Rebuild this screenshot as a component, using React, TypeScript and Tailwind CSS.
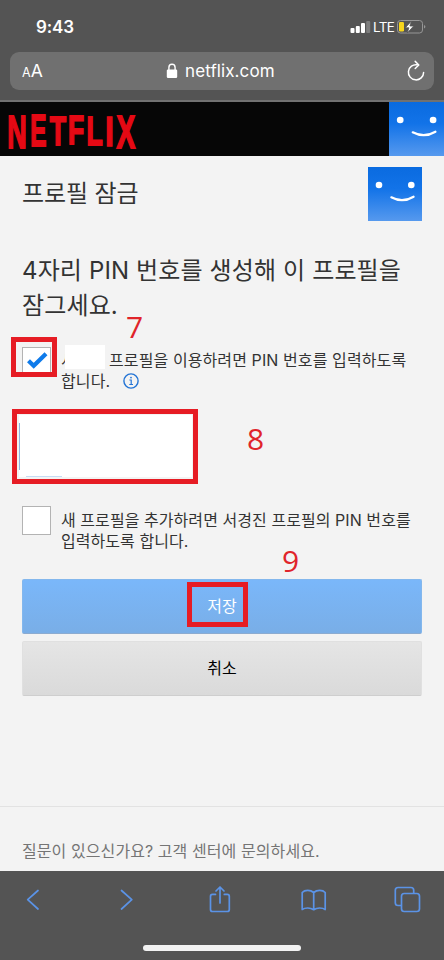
import clsx from "clsx";

interface AvatarProps {
  id: string;
  className?: string;
}

const Avatar: React.FC<AvatarProps> = ({ id, className }) => (
  <svg viewBox="0 0 54 54" preserveAspectRatio="none" className={className}>
    <defs>
      <linearGradient id={id} x1="0" y1="0" x2="0" y2="1">
        <stop offset="0" stopColor="#0a6be0" />
        <stop offset="0.4" stopColor="#1273e8" />
        <stop offset="1" stopColor="#5699ee" />
      </linearGradient>
    </defs>
    <rect width="54" height="54" fill={`url(#${id})`} />
    <circle cx="11" cy="18" r="3.3" fill="#fff" />
    <circle cx="43.3" cy="18" r="3.3" fill="#fff" />
    <path
      d="M23.3 30.3 Q34.5 36.4 45.6 29.7"
      fill="none"
      stroke="#fff"
      strokeWidth="2.2"
      strokeLinecap="round"
    />
  </svg>
);

// x, width and height of every letter, the bottom edge is slightly arched
const logo = [
  { char: "N", x: 9, width: 15.8, height: 32 },
  { char: "E", x: 31.8, width: 13.6, height: 30 },
  { char: "T", x: 50.2, width: 15.2, height: 28.5 },
  { char: "F", x: 69.8, width: 13.5, height: 28 },
  { char: "L", x: 88.2, width: 13.6, height: 28.5 },
  { char: "I", x: 107.2, width: 4.4, height: 29.5 },
  { char: "X", x: 117, width: 17.6, height: 32 },
];

// ink offset and ink width of the bold glyphs in em
const ink: Record<string, [number, number]> = {
  N: [0.067, 0.587],
  E: [0.067, 0.56],
  T: [0.021, 0.57],
  F: [0.067, 0.511],
  L: [0.067, 0.513],
  I: [0.067, 0.144],
  X: [0.021, 0.625],
};

const Logo = () => (
  <svg
    width="150"
    height="54"
    viewBox="0 0 150 54"
    className="overflow-visible"
  >
    {logo.map(({ char, x, width, height }) => {
      const sx = width / (ink[char][1] * 40);
      const sy = height / (0.688 * 40);
      return (
        <text
          key={char}
          transform={`translate(${x - ink[char][0] * 40 * sx} ${
            14.3 + height
          }) scale(${sx} ${sy})`}
          fontSize="40"
          fill="#e50914"
          stroke="#e50914"
          strokeWidth="1.5"
          vectorEffect="non-scaling-stroke"
          className="font-['Liberation_Sans',sans-serif] font-bold"
        >
          {char}
        </text>
      );
    })}
  </svg>
);

const StatusBar = () => (
  <div className="flex h-[51px] items-start justify-between pl-[36px] pr-[18px]">
    <span className="mt-[15px] text-[17px] leading-6 font-semibold tracking-[-0.1px] text-white">
      9:43
    </span>
    <div className="mt-[19px] flex">
      <svg width="22" height="16" viewBox="0 0 22 16" fill="#fff">
        <rect x="0.5" y="9" width="4" height="5" rx="1" />
        <rect x="5.8" y="7" width="4" height="7" rx="1" />
        <rect x="11" y="4" width="4" height="10" rx="1" />
        <rect x="16.2" y="2" width="4" height="12" rx="1" fill="#7d7d7d" />
      </svg>
      <span className="w-[24px] pl-px text-[13.5px] leading-4 tracking-[-0.7px] text-white">
        LTE
      </span>
      <svg width="30" height="16" viewBox="0 0 30 16">
        <rect
          x="1.5"
          y="1.5"
          width="25"
          height="12.5"
          rx="3"
          fill="none"
          stroke="#969696"
        />
        <path d="M28 6v3.5q1.4-.5 1.4-1.7T28 6" fill="#969696" />
        <rect x="3" y="3" width="5" height="9.5" rx="1.2" fill="#f7d51c" />
        <path
          d="M15.5 2l-6.2 6.8h3.6L11.3 14l6.4-7h-3.8z"
          fill="#fff"
          stroke="#565656"
          strokeWidth="0.8"
        />
      </svg>
    </div>
  </div>
);

const AddressBar = () => (
  <div className="mx-[10px] mt-[1px] flex h-[38px] items-center rounded-[9px] bg-[#707070] text-white">
    <div className="ml-[12px] flex w-[144px] items-baseline">
      <span className="text-[12.5px]">A</span>
      <span className="text-[17.5px]">A</span>
    </div>
    <svg width="12" height="16" viewBox="0 0 12 16">
      <rect x="0.8" y="6.5" width="10.4" height="8.5" rx="1.2" fill="#fff" />
      <path
        d="M2.9 7V4.4a3.1 3.1 0 0 1 6.2 0V7"
        fill="none"
        stroke="#fff"
        strokeWidth="1.4"
      />
    </svg>
    <span className="mt-px ml-[7px] text-[17px] tracking-[0.1px]">
      netflix.com
    </span>
    <svg
      width="20"
      height="22"
      viewBox="0 0 20 22"
      fill="none"
      stroke="#fff"
      strokeWidth="1.5"
      strokeLinecap="round"
      strokeLinejoin="round"
      className="mr-[8px] ml-auto"
    >
      <path d="M11.3 4.8A7.6 7.6 0 1 0 17.6 12.4" />
      <path d="M9.2 1.4l3.6 3.6-3.6 3.5" />
    </svg>
  </div>
);

interface CheckboxProps {
  checked?: boolean;
  className?: string;
}

const Checkbox: React.FC<CheckboxProps> = ({ checked, className }) => (
  <div
    className={clsx(
      "h-[29px] w-[29px] shrink-0 border border-[#b3b3b3] bg-white",
      className
    )}
  >
    {checked && (
      <svg width="27" height="27" viewBox="0 0 27 27">
        <path
          d="M5.5 12.8l5.2 5L23 5.7"
          fill="none"
          stroke="#0f7bea"
          strokeWidth="4.2"
        />
      </svg>
    )}
  </div>
);

const InfoIcon = () => (
  <svg
    width="16"
    height="16"
    viewBox="0 0 16 16"
    fill="none"
    stroke="#2374d5"
    className="ml-[13px]"
  >
    <circle cx="8" cy="8" r="7.1" strokeWidth="1.4" />
    <path d="M6.4 7H8.2V11.4M6.3 11.5H10" strokeWidth="1.2" />
    <circle cx="8" cy="4.6" r="0.9" fill="#2374d5" stroke="none" />
  </svg>
);

const Toolbar = () => (
  <div className="h-[89px] bg-[#545454]">
    <svg
      width="444"
      height="60"
      viewBox="0 0 444 60"
      fill="none"
      stroke="#5b93e6"
      strokeWidth="1.7"
      strokeLinecap="round"
      strokeLinejoin="round"
    >
      <path d="M38 19.5l-10.3 9.2L38 38" />
      <path d="M121.5 19.5l10.3 9.2-10.3 9.3" />
      <path d="M215.5 23.4h-3q-2 0-2 2V38.5q0 2 2 2h14.8q2 0 2-2V25.4q0-2-2-2h-3" />
      <path d="M220 32V16.5M216 20l4-4 4 4" />
      <path d="M313.7 21.5q-2.5-2.2-6-2.2t-5.5 2.2V38.5q2-1.5 5.5-1.5t6 1.7q2.5-1.7 6-1.7t5.5 1.5V21.5q-2-2.2-5.5-2.2t-6 2.2V38.5" />
      <path d="M401 34.5h-3q-2.7 0-2.7-2.7V19.2q0-2.7 2.7-2.7h13q2.7 0 2.7 2.7v3" />
      <rect x="401.5" y="22.5" width="18" height="18" rx="2.7" />
    </svg>
    <div className="mx-auto mt-[14px] h-[6px] w-[158px] rounded-full bg-[#f2f2f2]" />
  </div>
);

export default function App() {
  return (
    <div className="relative flex h-[960px] w-[444px] flex-col overflow-hidden bg-[#f3f3f3] font-[Inter,'Noto_Sans_CJK_KR',sans-serif] text-[#333]">
      <div className="h-[102px] border-b-2 border-[#717171] bg-[#545454]">
        <StatusBar />
        <AddressBar />
      </div>

      <header className="flex h-[54px] justify-between bg-[#060606]">
        <Logo />
        <Avatar id="header-avatar" className="h-[54px] w-[55px]" />
      </header>

      <main className="h-[650px] px-[22px] pt-[11px]">
        <div className="flex h-[53px] justify-between">
          <h1 className="text-[24px] leading-[53px] tracking-[-0.1px] whitespace-nowrap">
            프로필 잠금
          </h1>
          <Avatar id="profile-avatar" className="h-[54px] w-[54px]" />
        </div>

        <h2 className="mt-[33px] text-[24px] leading-[35px] tracking-[0.13px] whitespace-nowrap">
          4자리 PIN 번호를 생성해 이 프로필을
          <br />
          잠그세요.
        </h2>

        <div className="mt-[24px] flex h-[46px]">
          <Checkbox checked />
          <div className="relative ml-[10px] text-[16px] leading-[20.5px] tracking-[0.1px] whitespace-nowrap">
            <div className="mt-[3px] flex">
              <span className="w-[48px]">서</span>
              <span>프로필을 이용하려면 PIN 번호를 입력하도록</span>
            </div>
            <div className="flex items-center">
              합니다.
              <InfoIcon />
            </div>
            <div className="absolute -top-[2px] left-[4px] h-[24px] w-[40px] bg-white" />
          </div>
        </div>

        <div className="-ml-[10px] mt-[16px] h-[75px] w-[186px] border-5 border-[#e61c24] pt-[1px] pr-[1px] pb-[2px] pl-[2px]">
          <div className="relative h-[62px] bg-white">
            <div className="absolute top-[8px] left-0 h-[47px] w-px bg-[#8fb4e0]" />
            <div className="absolute bottom-0 left-[7px] h-px w-[36px] bg-[#c6dcf5]" />
          </div>
        </div>

        <div className="mt-[22px] flex h-[46px]">
          <Checkbox />
          <p className="mt-[4px] ml-[10px] text-[16px] leading-[20.5px] tracking-[0.06px] whitespace-nowrap">
            새 프로필을 추가하려면 서경진 프로필의 PIN 번호를
            <br />
            입력하도록 합니다.
          </p>
        </div>

        <button
          type="button"
          className="mt-[27px] block h-[55px] w-full rounded-[2px] border border-[#83b7ed] border-b-[#8cabd0] bg-linear-to-b from-[#7ab7fa] to-[#79aee7] pb-[2px] text-[16px] text-white"
        >
          저장
        </button>
        <button
          type="button"
          className="mt-[7px] block h-[55px] w-full rounded-[2px] border border-[#e0e0e0] border-b-[#cecece] bg-linear-to-b from-[#e5e5e5] to-[#dadada] pb-[2px] text-[16px] text-black"
        >
          취소
        </button>
      </main>

      <footer className="h-[65px] border-t border-[#e2e2e2] px-[22px] pt-[33px] text-[16px] leading-[22px] tracking-[0.08px] whitespace-nowrap text-[#757575]">
        질문이 있으신가요? 고객 센터에 문의하세요.
      </footer>

      <Toolbar />

      {/* step marks drawn over the page */}
      <div className="absolute top-[337px] left-[11px] h-[40px] w-[46px] border-5 border-[#e61c24]" />
      <div className="absolute top-[582px] left-[187px] h-[45px] w-[61px] border-5 border-[#e61c24]" />
      <div className="font-['Open_Sans',sans-serif] text-[30px] leading-[30px] text-[#e0242a]">
        <span className="absolute top-[312px] left-[126px]">7</span>
        <span className="absolute top-[424px] left-[247px]">8</span>
        <span className="absolute top-[546px] left-[282px]">9</span>
      </div>
    </div>
  );
}
